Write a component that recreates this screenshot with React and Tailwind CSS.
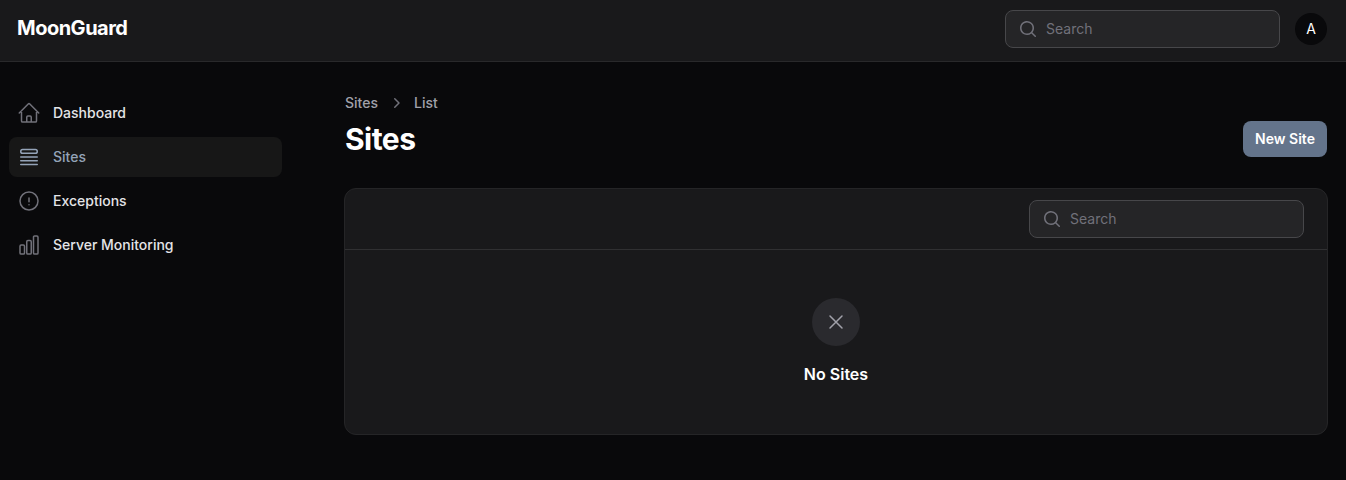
import { HiOutlineHome, HiOutlineQueueList, HiOutlineExclamationCircle, HiOutlineChartBar, HiOutlineXMark, HiMiniMagnifyingGlass, HiMiniChevronRight } from "react-icons/hi2";

const NAV = [
  { label: "Dashboard", Icon: HiOutlineHome },
  { label: "Sites", Icon: HiOutlineQueueList, active: true },
  { label: "Exceptions", Icon: HiOutlineExclamationCircle },
  { label: "Server Monitoring", Icon: HiOutlineChartBar },
];

function SearchBox() {
  return (
    <label className="flex h-[38px] w-[275px] items-center gap-2 rounded-lg border border-[#47474a] bg-[#252527] pl-3">
      <HiMiniMagnifyingGlass className="size-5 shrink-0 text-[#71717a]" />
      <input
        placeholder="Search"
        className="min-w-0 flex-1 bg-transparent text-sm leading-6 text-white outline-none placeholder:text-[#71717a]"
      />
    </label>
  );
}

export default function App() {
  return (
    <div className="flex h-[480px] flex-col overflow-hidden bg-[#09090b] font-['Inter',sans-serif] text-white antialiased">
      <header className="flex h-[62px] shrink-0 items-start justify-between border-b border-[#29292b] bg-[#19191b] pr-[19px] pl-[17px]">
        <div className="pt-[18px] text-xl leading-5 font-bold tracking-tight">MoonGuard</div>
        <div className="flex items-center gap-[15px] pt-[10px]">
          <SearchBox />
          <div className="flex size-8 items-center justify-center rounded-full bg-[#09090b] text-sm">A</div>
        </div>
      </header>
      <div className="flex min-h-0 flex-1">
        <nav className="flex w-[282px] shrink-0 flex-col gap-1 pt-[31px] pl-[9px]">
          {NAV.map(({ label, Icon, active }) => (
            <a
              key={label}
              className={`flex h-10 items-center gap-3 rounded-lg px-2 text-sm font-medium ${active ? "bg-[#171717] text-[#94a3b8]" : "text-[#e4e4e7]"}`}
            >
              <Icon className={`size-6 ${active ? "text-[#94a3b8]" : "text-[#71717a]"}`} />
              <span>{label}</span>
            </a>
          ))}
        </nav>
        <main className="flex min-w-0 flex-1 flex-col pt-[31px] pr-[18px] pl-[62px]">
          <div className="flex h-5 items-center pl-px text-sm font-medium text-[#a1a1aa]">
            <span>Sites</span>
            <HiMiniChevronRight className="mx-2 size-5 text-[#71717a]" />
            <span>List</span>
          </div>
          <div className="mt-2 flex h-9 items-center justify-between pr-px pl-px">
            <h1 className="text-3xl leading-9 font-bold tracking-[-0.018em]">Sites</h1>
            <button className="h-9 w-[84px] rounded-lg bg-[#64748b] text-sm font-semibold">New Site</button>
          </div>
          <section className="mt-[31px] flex h-[247px] flex-col rounded-xl border border-[#252527] bg-[#19191b]">
            <div className="flex h-[61px] items-start justify-end border-b border-[#303032] pt-[11px] pr-[23px]">
              <SearchBox />
            </div>
            <div className="flex flex-1 flex-col items-center pt-12">
              <div className="flex size-12 items-center justify-center rounded-full bg-[#2a2a2e]">
                <HiOutlineXMark className="size-6 text-[#a1a1aa]" />
              </div>
              <h2 className="mt-4 text-base leading-6 font-semibold">No Sites</h2>
            </div>
          </section>
        </main>
      </div>
    </div>
  );
}
